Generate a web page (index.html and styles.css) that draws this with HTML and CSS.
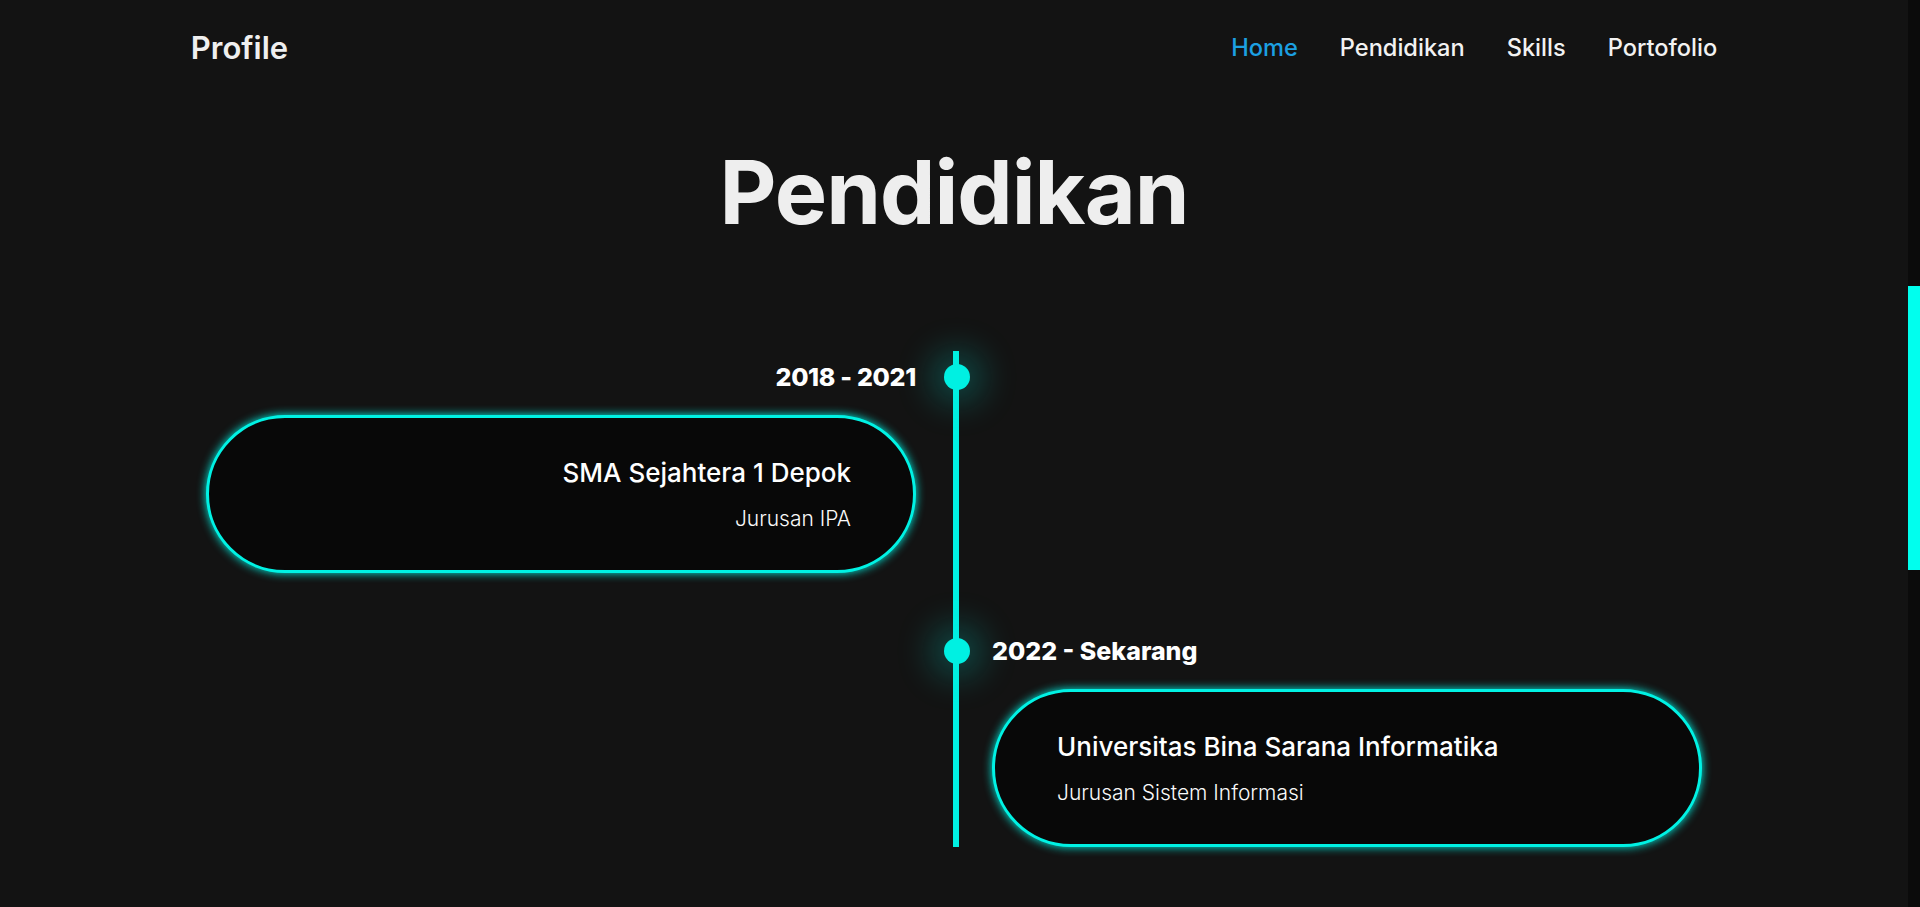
FILE: index.html
```html
<!DOCTYPE html>
<html lang="id">
<head>
<meta charset="utf-8">
<title>Profile</title>
<link rel="stylesheet" href="styles.css">
</head>
<body>
<div class="page">
  <header class="header">
    <a href="#home" class="logo">Profile</a>
    <nav class="navbar">
      <a href="#home" class="active">Home</a>
      <a href="#pendidikan">Pendidikan</a>
      <a href="#skills">Skills</a>
      <a href="#portofolio">Portofolio</a>
    </nav>
  </header>

  <section class="education" id="pendidikan">
    <h2 class="heading">Pendidikan</h2>
    <div class="timeline">
      <div class="timeline-item left">
        <span class="dot"></span>
        <div class="date">2018 - 2021</div>
        <div class="card">
          <h3>SMA Sejahtera 1 Depok</h3>
          <p>Jurusan IPA</p>
        </div>
      </div>
      <div class="timeline-item right">
        <span class="dot"></span>
        <div class="date">2022 - Sekarang</div>
        <div class="card">
          <h3>Universitas Bina Sarana Informatika</h3>
          <p>Jurusan Sistem Informasi</p>
        </div>
      </div>
    </div>
  </section>
</div>

<div class="scrollbar" aria-hidden="true">
  <div class="scrollbar-thumb"></div>
</div>
</body>
</html>
```

FILE: styles.css
```css
* {
  margin: 0;
  padding: 0;
  box-sizing: border-box;
}

html,
body {
  height: 100%;
  overflow: hidden;
  background: #131313;
}

body {
  font-family: Inter, "Open Sans", sans-serif;
  color: #fff;
}

a {
  text-decoration: none;
}

.page {
  margin-right: 12px;
}

.header {
  height: 94px;
  padding: 0 10%;
  display: flex;
  align-items: center;
  justify-content: space-between;
}

.logo {
  font-size: 31px;
  font-weight: 600;
  color: #efefef;
}

.navbar {
  display: flex;
  gap: 42px;
}

.navbar a {
  font-size: 23.6px;
  font-weight: 500;
  color: #f2f2f2;
}

.navbar a.active {
  color: #1ca0e2;
}

.education {
  padding: 54px 10% 0;
}

.heading {
  font-size: 88px;
  font-weight: 700;
  line-height: 88px;
  letter-spacing: -1px;
  text-align: center;
  color: #eeeeee;
  margin-bottom: 115px;
}

.timeline {
  position: relative;
  display: flex;
  flex-direction: column;
  gap: 52px;
  padding: 0 15px;
}

.timeline::before {
  content: "";
  position: absolute;
  top: 0;
  bottom: 0;
  left: calc(50% - 1px);
  width: 6px;
  background: #00f0e2;
}

.timeline-item {
  position: relative;
  width: 50%;
}

.timeline-item.left {
  padding-right: 38px;
}

.timeline-item.right {
  margin-left: 50%;
  padding-left: 38px;
}

.dot {
  position: absolute;
  top: 13px;
  width: 26px;
  height: 26px;
  border-radius: 50%;
  background: #00f0e2;
  box-shadow: 0 0 36px 12px rgba(0, 240, 226, 0.28);
  z-index: 1;
}

.left .dot {
  right: -16px;
}

.right .dot {
  left: -10px;
}

.date {
  font-size: 25px;
  font-weight: 800;
  line-height: 52px;
  letter-spacing: -0.3px;
  margin-bottom: 12px;
  color: #fff;
}

.right .date {
  letter-spacing: 0;
}

.left .date {
  text-align: right;
}

.card {
  height: 158px;
  padding: 37px 62px 0;
  border: 3px solid #00f2e4;
  border-radius: 79px;
  background: #080808;
  box-shadow: 0 0 10px #00f2e4;
}

.left .card {
  text-align: right;
}

.card h3 {
  font-size: 26px;
  font-weight: 500;
  line-height: 36px;
  margin-bottom: 13px;
}

.card p {
  font-size: 21px;
  font-weight: 300;
  line-height: 30px;
  color: #fafafa;
}

.scrollbar {
  position: fixed;
  top: 0;
  right: 0;
  bottom: 0;
  width: 12px;
  background: #0b0b0b;
}

.scrollbar-thumb {
  margin-top: 286px;
  height: 284px;
  background: #00ffee;
}
```
